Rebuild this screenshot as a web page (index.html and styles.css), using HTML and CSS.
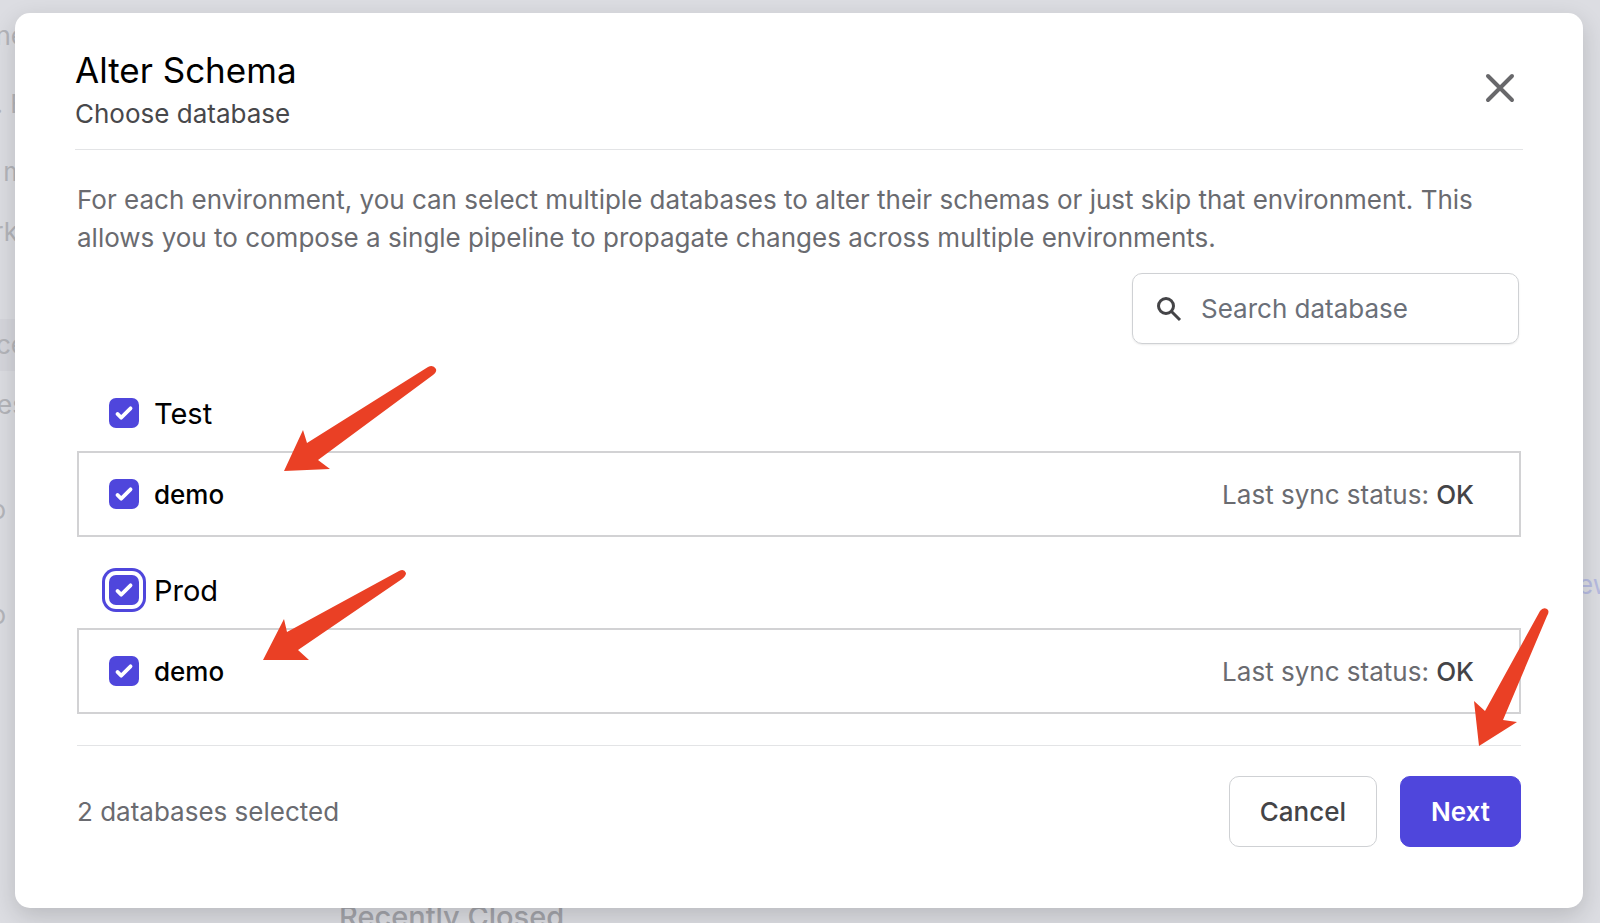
FILE: index.html
```html
<!DOCTYPE html>
<html lang="en">
<head>
<meta charset="utf-8">
<meta name="viewport" content="width=device-width, initial-scale=1">
<title>Alter Schema</title>
<link rel="stylesheet" href="styles.css">
</head>
<body>
<div class="page" aria-hidden="true">
  <ul class="sidebar">
    <li>ne</li>
    <li class="block">. E</li>
    <li class="block">m</li>
    <li class="short">rk</li>
    <li class="section active">ce</li>
    <li>es</li>
    <li class="item">o</li>
    <li class="item">o</li>
  </ul>
  <span class="page-link">ew</span>
  <div class="page-heading">Recently Closed</div>
</div>

<main class="dialog" role="dialog" aria-labelledby="title">
  <header class="dialog-header">
    <div>
      <h1 class="title" id="title">Alter Schema</h1>
      <p class="subtitle">Choose database</p>
    </div>
    <button class="close" type="button" aria-label="Close">
      <svg viewBox="0 0 36 36" width="36" height="36" fill="none" stroke="currentColor" stroke-width="4" stroke-linecap="round"><path d="M6 6l24 24M30 6L6 30"/></svg>
    </button>
  </header>

  <form class="content">
    <p class="intro">For each environment, you can select multiple databases to alter their schemas or just skip that environment. This allows you to compose a single pipeline to propagate changes across multiple environments.</p>

    <div class="search">
      <svg class="search-icon" viewBox="0 0 26 26" width="26" height="26" fill="none" stroke="currentColor" stroke-width="3"><circle cx="10" cy="10" r="7.5"/><path d="M15.5 15.5L24 24"/></svg>
      <input class="search-input" type="text" aria-label="Search database" placeholder="Search database">
    </div>

    <section class="group">
      <div class="group-header">
        <span class="check"><input class="box" type="checkbox" id="env-test" checked><svg class="tick" viewBox="0 0 16 16"><path d="M12.207 4.793a1 1 0 010 1.414l-5 5a1 1 0 01-1.414 0l-2-2a1 1 0 011.414-1.414L6.5 9.086l4.293-4.293a1 1 0 011.414 0z"/></svg></span>
        <label class="env-name" for="env-test">Test</label>
      </div>
      <div class="database">
        <span class="check"><input class="box" type="checkbox" id="db-test" checked><svg class="tick" viewBox="0 0 16 16"><path d="M12.207 4.793a1 1 0 010 1.414l-5 5a1 1 0 01-1.414 0l-2-2a1 1 0 011.414-1.414L6.5 9.086l4.293-4.293a1 1 0 011.414 0z"/></svg></span>
        <label class="db-name" for="db-test">demo</label>
        <span class="status">Last sync status: <strong>OK</strong></span>
      </div>
    </section>

    <section class="group">
      <div class="group-header">
        <span class="check"><input class="box focused" type="checkbox" id="env-prod" checked><svg class="tick" viewBox="0 0 16 16"><path d="M12.207 4.793a1 1 0 010 1.414l-5 5a1 1 0 01-1.414 0l-2-2a1 1 0 011.414-1.414L6.5 9.086l4.293-4.293a1 1 0 011.414 0z"/></svg></span>
        <label class="env-name" for="env-prod">Prod</label>
      </div>
      <div class="database">
        <span class="check"><input class="box" type="checkbox" id="db-prod" checked><svg class="tick" viewBox="0 0 16 16"><path d="M12.207 4.793a1 1 0 010 1.414l-5 5a1 1 0 01-1.414 0l-2-2a1 1 0 011.414-1.414L6.5 9.086l4.293-4.293a1 1 0 011.414 0z"/></svg></span>
        <label class="db-name" for="db-prod">demo</label>
        <span class="status">Last sync status: <strong>OK</strong></span>
      </div>
    </section>

    <footer class="footer">
      <span class="count">2 databases selected</span>
      <button class="button" type="button">Cancel</button>
      <button class="button primary" type="button">Next</button>
    </footer>
  </form>
</main>

<svg class="arrow arrow-test" viewBox="284 364 154 108" width="154" height="108"><path d="M284 471L303 430L307 443L428 367Q433 364 436 369Q437 372 433 375L318 460L330 469Z"/></svg>
<svg class="arrow arrow-prod" viewBox="263 568 144 92" width="144" height="92"><path d="M263 660L284 619L287 632L399 571Q404 568 406 573Q406 576 402 579L298 650L309 660Z"/></svg>
<svg class="arrow arrow-next" viewBox="1474 606 76 142" width="76" height="142"><path d="M1479 746L1474 701L1485 711L1540 611Q1543 607 1547 609Q1550 611 1547 616L1503 720L1517 722Z"/></svg>
</body>
</html>
```
FILE: styles.css
```css
* {
  box-sizing: border-box;
  margin: 0;
}

body {
  position: relative;
  min-height: 100vh;
  padding: 13px 17px 15px 15px;
  background: #dcdde2;
  font-family: Inter, "Liberation Sans", sans-serif;
  font-size: 26px;
  color: #000;
}

button,
input {
  font: inherit;
}

/* Dimmed page behind the dialog */
.page {
  position: absolute;
  inset: 0;
  overflow: hidden;
  color: #b4b5ba;
}

.sidebar {
  display: flex;
  flex-direction: column;
  gap: 28px;
  width: 26px;
  padding: 20px 0 0;
  list-style: none;
  line-height: 32px;
}

.sidebar li {
  display: flex;
  justify-content: flex-end;
  white-space: pre;
}

.sidebar .block {
  margin-top: 8px;
}

.sidebar .section {
  margin-top: 53px;
}

.sidebar .short {
  padding-right: 8px;
}

.sidebar .item {
  margin-top: 45px;
  padding-right: 20px;
}

.sidebar .active {
  box-shadow: 0 0 0 10px #d5d6dc;
  background: #d5d6dc;
}

.page-link {
  position: absolute;
  top: 569px;
  right: -14px;
  line-height: 32px;
  color: #b6bbe0;
}

.page-heading {
  position: absolute;
  left: 339px;
  bottom: -12px;
  font-size: 29px;
  font-weight: 500;
  line-height: 36px;
  color: #a4a5ab;
}

/* Dialog */
.dialog {
  position: relative;
  padding: 35px 60px 61px;
  border-radius: 15px;
  background: #fff;
  box-shadow: 0 8px 24px rgba(0, 0, 0, 0.16);
}

.dialog-header {
  display: flex;
  justify-content: space-between;
  align-items: flex-start;
  padding-bottom: 13px;
  border-bottom: 1px solid #e3e4e6;
}

.title {
  font-size: 35px;
  font-weight: 400;
  line-height: 44px;
}

.subtitle {
  line-height: 44px;
  color: #48484b;
}

.close {
  display: flex;
  margin: 22px 5px 0 0;
  padding: 0;
  border: 0;
  background: none;
  color: #68686b;
}

.content {
  padding: 31px 2px 0;
}

.intro {
  line-height: 38px;
  color: #6a6b70;
}

.search {
  display: flex;
  align-items: center;
  gap: 19px;
  width: 387px;
  height: 71px;
  margin: 16px 2px 16px auto;
  padding: 0 23px;
  border: 1px solid #cfd1d4;
  border-radius: 10px;
  box-shadow: 0 1px 2px rgba(0, 0, 0, 0.08);
}

.search-icon {
  flex: none;
  color: #444447;
}

.search-input {
  flex: 1;
  min-width: 0;
  padding: 0;
  border: 0;
  outline: 0;
  background: none;
}

.search-input::placeholder {
  color: #6b7079;
  opacity: 1;
}

.group {
  padding-top: 15px;
}

.group-header,
.database {
  display: flex;
  align-items: center;
  gap: 15px;
}

.group-header {
  height: 76px;
  padding-left: 32px;
}

.database {
  height: 86px;
  padding: 0 45px 0 30px;
  border: 2px solid #d2d2d4;
}

.check {
  display: grid;
  width: 30px;
  height: 30px;
}

.box,
.tick {
  grid-area: 1 / 1;
  width: 30px;
  height: 30px;
}

.box {
  appearance: none;
  margin: 0;
  border-radius: 7px;
  background: #4f46dc;
}

.box.focused {
  box-shadow: 0 0 0 4px #fff, 0 0 0 7px #4f46dc;
}

.tick {
  fill: #fff;
  pointer-events: none;
}

.env-name {
  font-size: 29px;
}

.db-name {
  font-weight: 500;
}

.status {
  margin-left: auto;
  color: #6a6b70;
}

.status strong {
  font-weight: 500;
  color: #444447;
}

.footer {
  display: flex;
  align-items: center;
  gap: 23px;
  margin-top: 31px;
  padding-top: 30px;
  border-top: 1px solid #e3e4e6;
}

.count {
  margin-right: auto;
  color: #6a6b70;
}

.button {
  height: 71px;
  padding: 0 30px;
  border: 1px solid #cfd1d4;
  border-radius: 10px;
  background: #fff;
  color: #444447;
  font-weight: 500;
}

.button.primary {
  border-color: #4f46dc;
  background: #4f46dc;
  color: #fff;
  font-weight: 600;
}

/* Callout arrows drawn over the dialog */
.arrow {
  position: absolute;
  fill: #ea4025;
  pointer-events: none;
}

.arrow-test {
  left: 284px;
  top: 364px;
}

.arrow-prod {
  left: 263px;
  top: 568px;
}

.arrow-next {
  right: 50px;
  top: 606px;
}
```
